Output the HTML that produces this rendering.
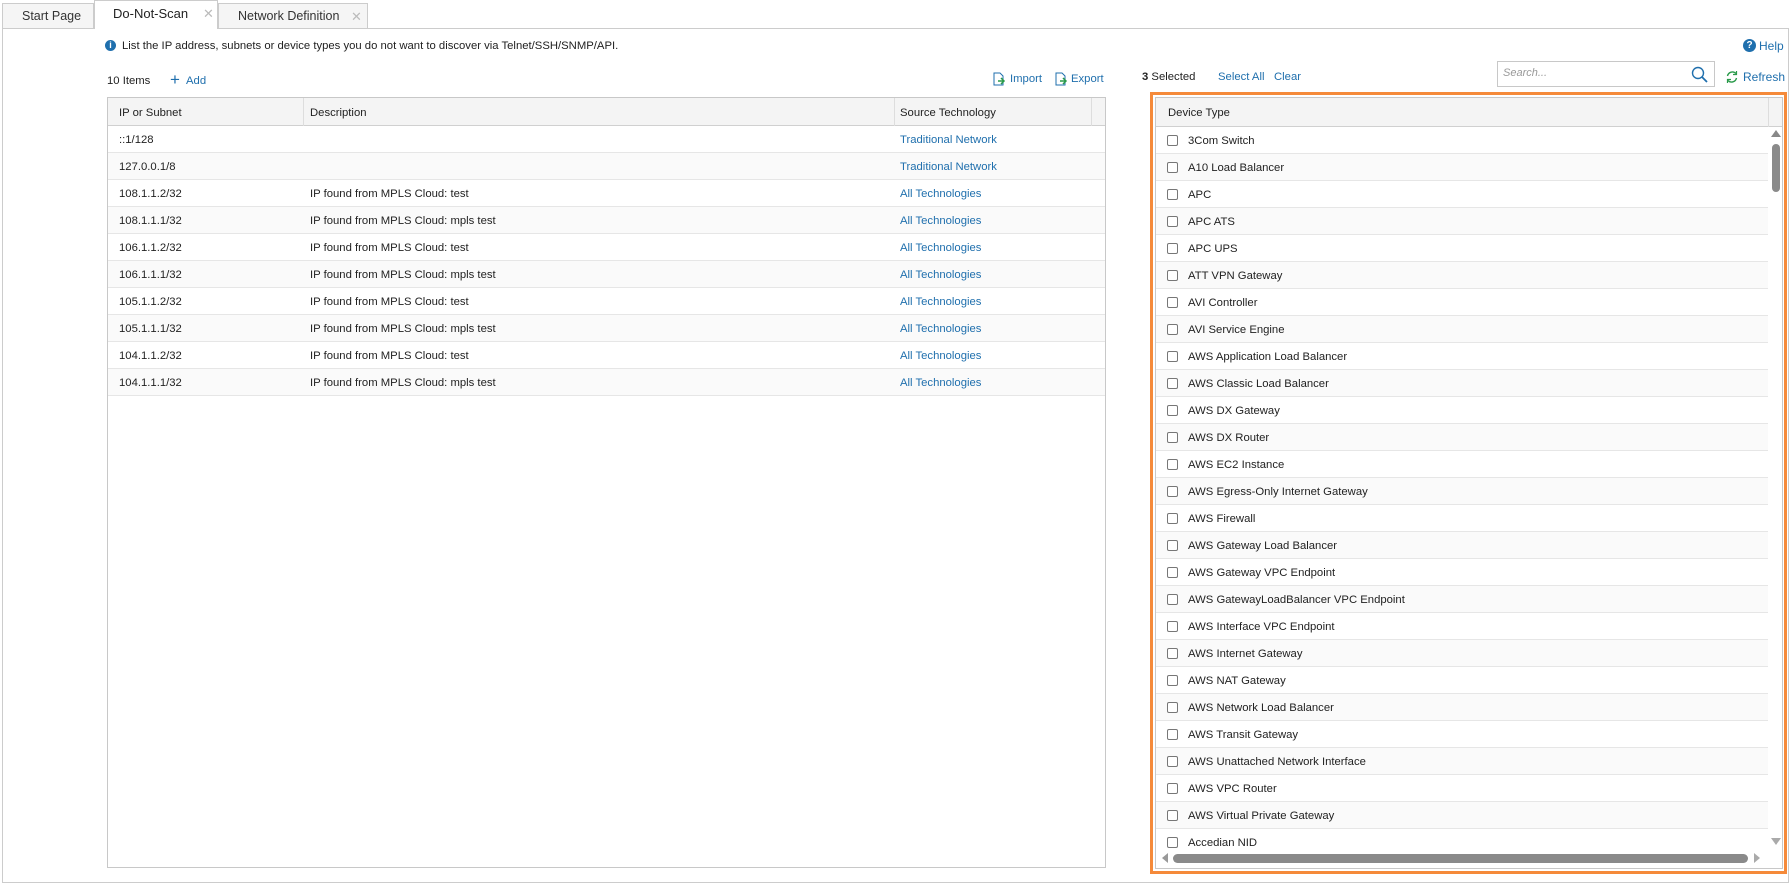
<!DOCTYPE html>
<html><head><meta charset="utf-8"><style>
*{box-sizing:border-box;margin:0;padding:0}
body{width:1791px;height:884px;background:#fff;font-family:"Liberation Sans",sans-serif;font-size:11.3px;color:#222;position:relative;overflow:hidden}
.a{position:absolute}
.tab{position:absolute;top:3px;height:26px;border:1px solid #ccc;border-bottom:none;background:#f5f5f5;font-size:12.5px;color:#333;line-height:25px}
.tab .x{position:absolute;color:#bbb;font-size:13px}
.blue{color:#1f6fad}
.lt{position:absolute;left:107px;top:97px;width:999px;height:771px;border:1px solid #c8c8c8}
.hd{position:absolute;left:0;top:0;right:0;height:28px;background:#f4f4f4;border-bottom:1px solid #d0d0d0}
.hd span{position:absolute;top:9px}
.vd{position:absolute;top:0;height:28px;width:1px;background:#ddd}
.row{position:absolute;left:0;right:0;height:27px;border-bottom:1px solid #e6e6e6}
.row span{position:absolute;top:8px}
.cb{position:absolute;left:11px;top:8px;width:11px;height:11px;border:1px solid #777;border-radius:2px;background:#fff}
</style></head><body>
<div class="tab" style="left:2px;width:92px;padding-left:19px">Start Page</div>
<div class="tab" style="left:94px;top:0;height:29px;width:124px;background:#fff;padding-left:18px;line-height:25px;font-size:13px;color:#222;z-index:2">Do-Not-Scan<span class="x" style="left:108px;top:0">✕</span></div>
<div class="tab" style="left:218px;width:150px;padding-left:19px">Network Definition<span class="x" style="left:132px;top:0">✕</span></div>
<div class="a" style="left:2px;top:28px;width:1787px;height:855px;border:1px solid #ccc"></div>

<div class="a" style="left:105px;top:40px;width:11px;height:11px;border-radius:50%;background:#1f6fad;color:#fff;font-size:9px;font-weight:bold;text-align:center;line-height:11px">i</div>
<div class="a" style="left:122px;top:40px">List the IP address, subnets or device types you do not want to discover via Telnet/SSH/SNMP/API.</div>
<div class="a" style="left:1743px;top:39px;width:13px;height:13px;border-radius:50%;background:#1f6fad;color:#fff;font-size:10px;font-weight:bold;text-align:center;line-height:13px">?</div>
<div class="a blue" style="left:1759px;top:39px;font-size:12px">Help</div>

<div class="a" style="left:107px;top:75px">10 Items</div>
<div class="a blue" style="left:170px;top:71px;font-size:17px;line-height:17px">+</div>
<div class="a blue" style="left:186px;top:75px">Add</div>
<svg class="a" style="left:992px;top:72px" width="14" height="14"><path d="M2 1h6l3 3v9H2z" fill="none" stroke="#1f6fad"/><path d="M6 9h6M9 6l3 3-3 3" stroke="#2a9a4a" stroke-width="1.5" fill="none"/></svg>
<div class="a blue" style="left:1010px;top:73px">Import</div>
<svg class="a" style="left:1054px;top:72px" width="14" height="14"><path d="M2 1h6l3 3v9H2z" fill="none" stroke="#1f6fad"/><path d="M6 9h6M9 6l3 3-3 3" stroke="#2a9a4a" stroke-width="1.5" fill="none"/></svg>
<div class="a blue" style="left:1071px;top:73px">Export</div>

<div class="lt">
<div class="hd"><span style="left:11px">IP or Subnet</span><span style="left:202px">Description</span><span style="left:792px">Source Technology</span>
<div class="vd" style="left:195px"></div><div class="vd" style="left:786px"></div><div class="vd" style="left:983px"></div></div>
<div class="row" style="top:28px"><span style="left:11px">::1/128</span><span class="blue" style="left:792px">Traditional Network</span></div>
<div class="row" style="top:55px;background:#fafafa"><span style="left:11px">127.0.0.1/8</span><span class="blue" style="left:792px">Traditional Network</span></div>
<div class="row" style="top:82px"><span style="left:11px">108.1.1.2/32</span><span style="left:202px">IP found from MPLS Cloud: test</span><span class="blue" style="left:792px">All Technologies</span></div>
<div class="row" style="top:109px;background:#fafafa"><span style="left:11px">108.1.1.1/32</span><span style="left:202px">IP found from MPLS Cloud: mpls test</span><span class="blue" style="left:792px">All Technologies</span></div>
<div class="row" style="top:136px"><span style="left:11px">106.1.1.2/32</span><span style="left:202px">IP found from MPLS Cloud: test</span><span class="blue" style="left:792px">All Technologies</span></div>
<div class="row" style="top:163px;background:#fafafa"><span style="left:11px">106.1.1.1/32</span><span style="left:202px">IP found from MPLS Cloud: mpls test</span><span class="blue" style="left:792px">All Technologies</span></div>
<div class="row" style="top:190px"><span style="left:11px">105.1.1.2/32</span><span style="left:202px">IP found from MPLS Cloud: test</span><span class="blue" style="left:792px">All Technologies</span></div>
<div class="row" style="top:217px;background:#fafafa"><span style="left:11px">105.1.1.1/32</span><span style="left:202px">IP found from MPLS Cloud: mpls test</span><span class="blue" style="left:792px">All Technologies</span></div>
<div class="row" style="top:244px"><span style="left:11px">104.1.1.2/32</span><span style="left:202px">IP found from MPLS Cloud: test</span><span class="blue" style="left:792px">All Technologies</span></div>
<div class="row" style="top:271px;background:#fafafa"><span style="left:11px">104.1.1.1/32</span><span style="left:202px">IP found from MPLS Cloud: mpls test</span><span class="blue" style="left:792px">All Technologies</span></div>
</div>

<div class="a" style="left:1142px;top:71px"><b>3</b> Selected</div>
<div class="a blue" style="left:1218px;top:71px">Select All</div>
<div class="a blue" style="left:1274px;top:71px">Clear</div>
<div class="a" style="left:1497px;top:61px;width:218px;height:26px;border:1px solid #c8c8c8"><span style="position:absolute;left:5px;top:5px;font-style:italic;color:#999;font-size:11px">Search...</span>
<svg style="position:absolute;right:6px;top:4px" width="17" height="17"><circle cx="7" cy="7" r="5.5" fill="none" stroke="#1f6fad" stroke-width="1.4"/><path d="M11 11l5 5" stroke="#1f6fad" stroke-width="1.8"/></svg></div>
<svg class="a" style="left:1725px;top:70px" width="14" height="14"><path d="M2.5 6A5 5 0 0 1 11 3.5" fill="none" stroke="#2a9a4a" stroke-width="1.4"/><path d="M11.5 8A5 5 0 0 1 3 10.5" fill="none" stroke="#2a9a4a" stroke-width="1.4"/><path d="M11.5 1v3.5H8" fill="none" stroke="#2a9a4a" stroke-width="1.2"/><path d="M2.5 13v-3.5H6" fill="none" stroke="#2a9a4a" stroke-width="1.2"/></svg>
<div class="a blue" style="left:1743px;top:70px;font-size:12px">Refresh</div>

<div class="a" style="left:1150px;top:92px;width:637px;height:782px;border:3px solid #f58a3a"></div>
<div class="a" style="left:1155px;top:97px;width:628px;height:772px;border:1px solid #c8c8c8;overflow:hidden">
<div class="hd" style="height:29px"><span style="left:12px">Device Type</span><div class="vd" style="left:612px;height:29px"></div></div>
<div style="position:absolute;left:0;top:29px;width:612px">
<div class="row" style="top:0"><div class="cb"></div><span style="left:32px">3Com Switch</span></div>
<div class="row" style="top:27px;background:#fafafa"><div class="cb"></div><span style="left:32px">A10 Load Balancer</span></div>
<div class="row" style="top:54px"><div class="cb"></div><span style="left:32px">APC</span></div>
<div class="row" style="top:81px;background:#fafafa"><div class="cb"></div><span style="left:32px">APC ATS</span></div>
<div class="row" style="top:108px"><div class="cb"></div><span style="left:32px">APC UPS</span></div>
<div class="row" style="top:135px;background:#fafafa"><div class="cb"></div><span style="left:32px">ATT VPN Gateway</span></div>
<div class="row" style="top:162px"><div class="cb"></div><span style="left:32px">AVI Controller</span></div>
<div class="row" style="top:189px;background:#fafafa"><div class="cb"></div><span style="left:32px">AVI Service Engine</span></div>
<div class="row" style="top:216px"><div class="cb"></div><span style="left:32px">AWS Application Load Balancer</span></div>
<div class="row" style="top:243px;background:#fafafa"><div class="cb"></div><span style="left:32px">AWS Classic Load Balancer</span></div>
<div class="row" style="top:270px"><div class="cb"></div><span style="left:32px">AWS DX Gateway</span></div>
<div class="row" style="top:297px;background:#fafafa"><div class="cb"></div><span style="left:32px">AWS DX Router</span></div>
<div class="row" style="top:324px"><div class="cb"></div><span style="left:32px">AWS EC2 Instance</span></div>
<div class="row" style="top:351px;background:#fafafa"><div class="cb"></div><span style="left:32px">AWS Egress-Only Internet Gateway</span></div>
<div class="row" style="top:378px"><div class="cb"></div><span style="left:32px">AWS Firewall</span></div>
<div class="row" style="top:405px;background:#fafafa"><div class="cb"></div><span style="left:32px">AWS Gateway Load Balancer</span></div>
<div class="row" style="top:432px"><div class="cb"></div><span style="left:32px">AWS Gateway VPC Endpoint</span></div>
<div class="row" style="top:459px;background:#fafafa"><div class="cb"></div><span style="left:32px">AWS GatewayLoadBalancer VPC Endpoint</span></div>
<div class="row" style="top:486px"><div class="cb"></div><span style="left:32px">AWS Interface VPC Endpoint</span></div>
<div class="row" style="top:513px;background:#fafafa"><div class="cb"></div><span style="left:32px">AWS Internet Gateway</span></div>
<div class="row" style="top:540px"><div class="cb"></div><span style="left:32px">AWS NAT Gateway</span></div>
<div class="row" style="top:567px;background:#fafafa"><div class="cb"></div><span style="left:32px">AWS Network Load Balancer</span></div>
<div class="row" style="top:594px"><div class="cb"></div><span style="left:32px">AWS Transit Gateway</span></div>
<div class="row" style="top:621px;background:#fafafa"><div class="cb"></div><span style="left:32px">AWS Unattached Network Interface</span></div>
<div class="row" style="top:648px"><div class="cb"></div><span style="left:32px">AWS VPC Router</span></div>
<div class="row" style="top:675px;background:#fafafa"><div class="cb"></div><span style="left:32px">AWS Virtual Private Gateway</span></div>
<div class="row" style="top:702px;border:none"><div class="cb"></div><span style="left:32px">Accedian NID</span></div>
</div>
<div style="position:absolute;left:615px;top:32px;width:0;height:0;border-left:5px solid transparent;border-right:5px solid transparent;border-bottom:7px solid #888"></div>
<div style="position:absolute;left:616px;top:46px;width:8px;height:48px;border-radius:4px;background:#8a8a8a"></div>
<div style="position:absolute;left:615px;top:740px;width:0;height:0;border-left:5px solid transparent;border-right:5px solid transparent;border-top:7px solid #aaa"></div>
<div style="position:absolute;left:6px;top:755px;width:0;height:0;border-top:5px solid transparent;border-bottom:5px solid transparent;border-right:6px solid #999"></div>
<div style="position:absolute;left:17px;top:756px;width:575px;height:9px;border-radius:5px;background:#8a8a8a"></div>
<div style="position:absolute;left:598px;top:755px;width:0;height:0;border-top:5px solid transparent;border-bottom:5px solid transparent;border-left:6px solid #aaa"></div>
</div>
</body></html>
